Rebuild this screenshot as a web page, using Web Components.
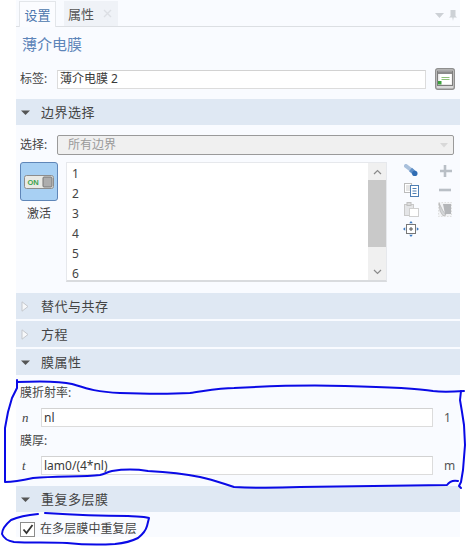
<!DOCTYPE html>
<html lang="zh">
<head>
<meta charset="utf-8">
<title>薄介电膜</title>
<style>
  html, body { margin: 0; background: #fff; }
  body { font: 12px/16px "Noto Sans", "Noto Sans CJK SC", sans-serif; color: #444; }
</style>
</head>
<body>
<settings-panel></settings-panel>
<script>
const CJK = '"Noto Sans", "Noto Sans CJK SC", sans-serif';

class SectionBar extends HTMLElement {
  constructor() {
    super();
    this.attachShadow({mode: 'open'});
    const open = this.hasAttribute('open');
    this.shadowRoot.innerHTML = `
      <style>
        :host { display: flex; align-items: center; height: 26px; background: #dfe8f3; font-size: 13px; color: #444; letter-spacing: .5px; }
        svg { width: 9px; height: 9px; margin: 0 11px 0 5px; flex: none; }
      </style>
      ${open
        ? '<svg viewBox="0 0 9 9"><path d="M0 2.5h9L4.5 7z" fill="#555"/></svg>'
        : '<svg viewBox="0 0 9 11" style="height:11px"><path d="M1 .8l6 4.7-6 4.7z" fill="#f7f8fa" stroke="#c4c7cc"/></svg>'}
      <slot></slot>`;
  }
}
customElements.define('section-bar', SectionBar);

class TextBox extends HTMLElement {
  constructor() {
    super();
    this.attachShadow({mode: 'open'});
    this.shadowRoot.innerHTML = `
      <style>
        :host { display: flex; align-items: center; box-sizing: border-box; background: #fff; border: 1px solid #dcdcdc; border-top-color: #d2d2d2; padding: 0 2px; font-size: 12px; color: #3a3a3a; min-width: 0; }
      </style>
      <slot></slot>`;
  }
}
customElements.define('text-box', TextBox);

class QuantityRow extends HTMLElement {
  constructor() {
    super();
    this.attachShadow({mode: 'open'});
    this.shadowRoot.innerHTML = `
      <style>
        :host { display: grid; grid-template-columns: 25px 392px 1fr; align-items: center; height: 19px; }
        i { font: italic 13px "Liberation Serif", serif; color: #444; padding-left: 6px; }
        text-box { height: 19px; }
        span { font-size: 12px; color: #555; padding-left: 11px; }
      </style>
      <i>${this.getAttribute('sym')}</i>
      <text-box><slot></slot></text-box>
      <span>${this.getAttribute('unit')}</span>`;
  }
}
customElements.define('quantity-row', QuantityRow);

class PanelTabs extends HTMLElement {
  constructor() {
    super();
    this.attachShadow({mode: 'open'});
    this.shadowRoot.innerHTML = `
      <style>
        :host { display: flex; align-items: flex-end; height: 27px; box-sizing: border-box; border-bottom: 1px solid #dcdfe3; font-size: 13px; }
        .tab { height: 25px; display: flex; align-items: center; box-sizing: border-box; }
        .on { margin-left: 3px; width: 37px; justify-content: center; background: #fbfcff; border: 1px solid #e3e6ea; border-bottom: 0; color: #4a76ad; height: 26px; margin-bottom: -1px; }
        .off { margin-left: 8px; width: 54px; padding-left: 4px; background: #eff2f7; color: #555; }
        .off svg { margin-left: 9px; }
        .menu { margin: 0 0 5px auto; display: flex; align-items: center; gap: 5px; padding-right: 3px; }
      </style>
      <div class="tab on">设置</div>
      <div class="tab off">属性
        <svg width="9" height="9" viewBox="0 0 9 9"><path d="M1 1l7 7M8 1L1 8" stroke="#dcdfe4" stroke-width="1.4"/></svg>
      </div>
      <div class="menu">
        <svg width="9" height="6" viewBox="0 0 9 6"><path d="M0 0h9L4.500 5z" fill="#cdd1d6"/></svg>
        <svg width="8" height="11" viewBox="0 0 8 11"><path d="M1.500 0h5v6l1.500 1.500H0L1.500 6zM3.300 7.500h1.400L4 11z" fill="#cdd1d6"/></svg>
      </div>`;
  }
}
customElements.define('panel-tabs', PanelTabs);

class BoundaryList extends HTMLElement {
  constructor() {
    super();
    this.attachShadow({mode: 'open'});
    const rows = ['1','2','3','4','5','6'].map(n => `<div class="row">${n}</div>`).join('');
    this.shadowRoot.innerHTML = `
      <style>
        :host { display: flex; width: 321px; height: 120px; box-sizing: border-box; border: 1px solid #e6e8ec; border-bottom: 2px solid #d9dbde; background: #fff; overflow: hidden; }
        .rows { flex: 1; padding: 1px 0 0 5px; }
        .row { height: 20px; line-height: 20px; font-size: 12px; color: #444; }
        .bar { width: 18px; background: #f0f0f0; display: flex; flex-direction: column; }
        .arrow { height: 17px; display: flex; align-items: center; justify-content: center; }
        .thumb { height: 67px; background: #c9c9c9; }
        .gap { flex: 1; }
      </style>
      <div class="rows">${rows}</div>
      <div class="bar">
        <div class="arrow"><svg width="9" height="6" viewBox="0 0 9 6"><path d="M1 5l3.500-3.500L8 5" fill="none" stroke="#8a8a8a" stroke-width="1.200"/></svg></div>
        <div class="thumb"></div>
        <div class="gap"></div>
        <div class="arrow"><svg width="9" height="6" viewBox="0 0 9 6"><path d="M1 1l3.500 3.500L8 1" fill="none" stroke="#8a8a8a" stroke-width="1.200"/></svg></div>
      </div>`;
  }
}
customElements.define('boundary-list', BoundaryList);

class ActivateToggle extends HTMLElement {
  constructor() {
    super();
    this.attachShadow({mode: 'open'});
    this.shadowRoot.innerHTML = `
      <style>
        :host { display: flex; flex-direction: column; align-items: center; width: 38px; font-size: 12px; color: #444; }
        .btn { width: 38px; height: 39px; box-sizing: border-box; background: #a8d0f3; border: 1px solid #5f86b8; border-radius: 3px; display: flex; align-items: center; justify-content: center; }
        .lbl { margin-top: 4px; line-height: 18px; }
      </style>
      <div class="btn">
        <svg width="30" height="14" viewBox="0 0 30 14">
          <rect x=".5" y=".5" width="29" height="13" rx="2" fill="#e9eae6" stroke="#8d8d8d"/>
          <text x="3.500" y="10" font-family="Liberation Sans, sans-serif" font-size="7.500" font-weight="700" fill="#3fa34d">ON</text>
          <rect x="19" y="2" width="9" height="10" rx="1" fill="#adadad" stroke="#777"/>
        </svg>
      </div>
      <div class="lbl">激活</div>`;
  }
}
customElements.define('activate-toggle', ActivateToggle);

class SelectionTools extends HTMLElement {
  constructor() {
    super();
    this.attachShadow({mode: 'open'});
    this.shadowRoot.innerHTML = `
      <style>
        :host { display: grid; grid-template-columns: 16px 16px; column-gap: 18px; grid-auto-rows: 19.300px; justify-items: center; align-items: center; }
      </style>
      <svg width="14" height="13" viewBox="0 0 14 13"><path d="M2 2l6.500 5" stroke="#a9c0dc" stroke-width="4" stroke-linecap="round"/><path d="M6.500 5.500l4 3.500" stroke="#5e8fc8" stroke-width="4.400"/><circle cx="10.800" cy="9.400" r="2.700" fill="#2f6cb3"/></svg>
      <svg width="14" height="14" viewBox="0 0 14 14"><path d="M6 1v12M1 7h12" transform="translate(1 0)" stroke="#b9bfc6" stroke-width="2.600"/></svg>
      <svg width="15" height="14" viewBox="0 0 15 14"><rect x=".5" y=".5" width="7" height="9" fill="#fff" stroke="#bbb"/><path d="M2 3h4M2 5h4M2 7h4" stroke="#ccc"/><rect x="6.500" y="2.500" width="8" height="11" fill="#fff" stroke="#4e7fb5"/><path d="M8.500 5.500h4M8.500 8h4M8.500 10.500h4" stroke="#4e7fb5"/></svg>
      <svg width="14" height="4" viewBox="0 0 14 4"><path d="M1 2h12" stroke="#b9bfc6" stroke-width="2.600"/></svg>
      <svg width="15" height="15" viewBox="0 0 15 15"><rect x=".5" y="2.500" width="9" height="11" fill="#e4e5e7" stroke="#c9c9c9"/><rect x="3" y=".5" width="4" height="3" fill="#ddd" stroke="#c0c0c0"/><rect x="5.500" y="6.500" width="9" height="8" fill="#fff" stroke="#d0d0d0"/></svg>
      <svg width="14" height="15" viewBox="0 0 14 15"><rect x=".5" y=".5" width="13" height="14" fill="#f2f3f5" stroke="#dfdfdf" stroke-dasharray="1.500 1.500"/><path d="M5 2h8v10H7z" fill="#b4b6b9"/><path d="M1 1l4 8 3 4-3 .8L2 9z" fill="#d4d6d8" stroke="#aaa" stroke-width=".6"/></svg>
      <svg width="16" height="16" viewBox="0 0 16 16"><rect x="3.500" y="3.500" width="9" height="9" fill="#fff" stroke="#777"/><path d="M8 6v4M6 8h4" stroke="#555"/><path d="M8 0l1.800 2.200H6.200zM8 16l1.800-2.200H6.200zM0 8l2.200-1.800v3.600zM16 8l-2.200-1.800v3.600z" fill="#3a78c0"/></svg>`;
  }
}
customElements.define('selection-tools', SelectionTools);

class ScribbleMarks extends HTMLElement {
  constructor() {
    super();
    this.attachShadow({mode: 'open'});
    // hand drawn marks that lie over the panel
    this.shadowRoot.innerHTML = `
      <style>
        :host { position: absolute; left: 0; top: 0; width: 467px; height: 548px; pointer-events: none; }
        path { fill: none; stroke: #0a0ae6; stroke-width: 2; stroke-linecap: round; stroke-linejoin: round; }
      </style>
      <svg width="467" height="548" viewBox="0 0 467 548">
        <path d="M17 380 L17 388 L12 398 L8 412 L5 428 L5 482 C14 482 24 480 33 478 C58 476 82 477 100 475 C105 474 107 472 112 471 C125 469 135 469 148 471 C170 472 186 474 200 477 C214 480 224 484 234 487 C255 488 275 488 300 487 C350 486 400 486 447 485 C449 482 453 480 458 481"/>
        <path d="M17 382 C40 381 60 381 72 384 C85 388 95 392 120 393 C150 394 170 394 190 393 C205 391 220 388 234 388 C270 386 310 385 345 386 C385 387 415 388 433 391 C440 392 450 392 464 391"/>
        <path d="M461 391 L460 400 L462 412 L464 425 L465 445 L463 470 L461 482 L459 486 L461 488"/>
        <path d="M38 514 C28 515 18 517 11 520 C5 525 2 530 2 534 C4 539 8 541 14 542 C30 543 50 542 67 543 C85 545 100 545 115 544 C125 543 132 541 138 538 C143 534 146 530 147 526 L149 518 C142 516 136 517 128 516 C105 516 75 515 45 513"/>
      </svg>`;
  }
}
customElements.define('scribble-marks', ScribbleMarks);

class SettingsPanel extends HTMLElement {
  constructor() {
    super();
    this.attachShadow({mode: 'open'});
    this.shadowRoot.innerHTML = `
      <style>
        :host { display: block; position: relative; width: 467px; height: 548px; overflow: hidden; font-family: ${CJK}; }
        .panel { margin-left: 16px; width: 444px; height: 537px; background: #f9fbff; box-sizing: border-box; }
        h1 { margin: 0; font-weight: 400; font-size: 15px; line-height: 20px; color: #5d85b9; padding: 7px 0 0 6px; height: 41px; box-sizing: border-box; }
        .label-row { display: flex; align-items: center; height: 22px; padding-left: 4px; font-size: 12px; }
        .label-row span { width: 37px; }
        .label-row text-box { width: 369px; height: 19px; margin-right: 9px; }
        .note { width: 20px; height: 22px; flex: none; }
        .sel-body { height: 168px; }
        .select-row { display: flex; align-items: center; height: 20px; padding: 10px 0 7px 4px; font-size: 12px; }
        .select-row span { width: 37px; }
        .select { width: 397px; height: 20px; box-sizing: border-box; border: 1px solid #9a9a9a; border-radius: 2px; background: #f0f0f0; color: #9a9a9a; display: flex; align-items: center; justify-content: space-between; padding: 0 5px 0 10px; }
        .pick { display: flex; padding-left: 4px; }
        .pick boundary-list { margin-left: 8px; }
        .pick selection-tools { margin-left: 16px; margin-top: -1px; align-self: flex-start; }
        .gapped { margin-bottom: 2px; }
        .props { height: 111px; padding-top: 9px; box-sizing: border-box; font-size: 12px; }
        .props .cap { height: 24px; line-height: 18px; padding-left: 4px; }
        .props quantity-row { margin-bottom: 5px; }
        .repeat { display: flex; align-items: center; gap: 5px; padding: 9px 0 0 4px; font-size: 12px; letter-spacing: .1px; }
        .check { width: 15px; height: 15px; box-sizing: border-box; border: 1px solid #8c8c8c; background: #fff; display: flex; align-items: center; justify-content: center; }
      </style>
      <div class="panel">
        <panel-tabs></panel-tabs>
        <h1>薄介电膜</h1>
        <div class="label-row">
          <span>标签:</span>
          <text-box>薄介电膜 2</text-box>
          <svg class="note" viewBox="0 0 20 22">
            <rect x=".7" y=".7" width="18.600" height="20.600" rx="2" fill="#d9d9d9" stroke="#8f8f8f" stroke-width="1.400"/>
            <rect x="2.500" y="3" width="15" height="14.500" fill="#e8e8e8" stroke="#7d7d7d"/>
            <rect x="3" y="3.500" width="14" height="2.500" fill="#8b8b8b"/>
            <rect x="4.500" y="6" width="12" height="10" fill="#fff"/>
            <path d="M6.500 9.500h8M6.500 11.500h8" stroke="#8dbf78" stroke-width="1.200"/>
            <rect x="3" y="13" width="3.500" height="3.500" fill="#3da03d"/>
          </svg>
        </div>
        <section-bar open style="margin-top:9px">边界选择</section-bar>
        <div class="sel-body">
          <div class="select-row"><span>选择:</span>
            <div class="select">所有边界<svg width="8" height="5" viewBox="0 0 8 5"><path d="M0 0h8L4 4.500z" fill="#d8d8d8"/></svg></div>
          </div>
          <div class="pick">
            <activate-toggle></activate-toggle>
            <boundary-list></boundary-list>
            <selection-tools></selection-tools>
          </div>
        </div>
        <section-bar class="gapped">替代与共存</section-bar>
        <section-bar class="gapped">方程</section-bar>
        <section-bar open>膜属性</section-bar>
        <div class="props">
          <div class="cap">膜折射率:</div>
          <quantity-row sym="n" unit="1">nl</quantity-row>
          <div class="cap">膜厚:</div>
          <quantity-row sym="t" unit="m">lam0/(4*nl)</quantity-row>
        </div>
        <section-bar open>重复多层膜</section-bar>
        <div class="repeat">
          <div class="check"><svg width="12" height="11" viewBox="0 0 12 11"><path d="M1.500 5.500l3 3.500 6-8" fill="none" stroke="#333" stroke-width="1.800"/></svg></div>
          在多层膜中重复层
        </div>
      </div>
      <scribble-marks></scribble-marks>`;
  }
}
customElements.define('settings-panel', SettingsPanel);
</script>
</body>
</html>
